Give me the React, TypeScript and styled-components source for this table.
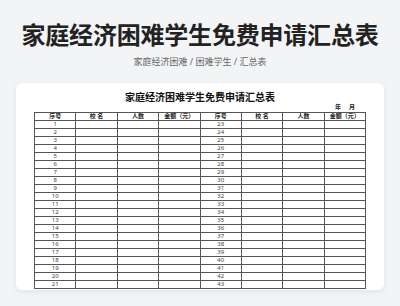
import React from "react";
import styled, { createGlobalStyle } from "styled-components";

const GlobalStyle = createGlobalStyle`
    html, body {
        margin: 0;
        padding: 0;
        background: #f3f4f6;
        font-family: "Noto Sans", "Noto Sans CJK SC", sans-serif;
    }
`;

const Page = styled.div`
    width: 400px;
    height: 306px;
    display: flex;
    flex-direction: column;
    align-items: center;
    overflow: hidden;
`;

const Title = styled.h1`
    margin: 20px 0 0;
    font-size: 24px;
    line-height: 30px;
    font-weight: 700;
    color: #222;
    letter-spacing: -0.2px;
`;

const Crumbs = styled.div`
    margin-top: 6px;
    font-size: 9px;
    line-height: 12px;
    color: #666;
`;

const Card = styled.div`
    margin-top: 15px;
    width: 368px;
    height: 207px;
    box-sizing: border-box;
    padding: 8px 18px 0;
    background: #fff;
    border-radius: 6px;
    box-shadow: 0 2px 6px rgba(0, 0, 0, 0.08);
    overflow: hidden;
`;

const SheetTitle = styled.div`
    text-align: center;
    font-size: 10px;
    line-height: 12px;
    font-weight: 700;
    color: #111;
`;

const DateLine = styled.div`
    display: flex;
    justify-content: flex-end;
    gap: 8px;
    padding-right: 11px;
    font-size: 6px;
    line-height: 9px;
    font-weight: 700;
    color: #222;
`;

const Sheet = styled.table`
    width: 332px;
    border-collapse: collapse;
    table-layout: fixed;
`;

const Cell = styled.td<{ $head?: boolean }>`
    height: 7px;
    padding: 0;
    border: 1px solid #555;
    text-align: center;
    font-size: 6px;
    line-height: 7px;
    font-weight: ${(p) => (p.$head ? 700 : 400)};
    color: ${(p) => (p.$head ? "#222" : "#444")};
    white-space: nowrap;
    overflow: hidden;
`;

const heads = ["序号", "校 名", "人数", "金额（元）"];

const App: React.FC = () => {
    const rows = Array.from({ length: 21 }, (_, i) => i + 1);
    return (
        <Page>
            <GlobalStyle />
            <Title>家庭经济困难学生免费申请汇总表</Title>
            <Crumbs>家庭经济困难 / 困难学生 / 汇总表</Crumbs>
            <Card>
                <SheetTitle>家庭经济困难学生免费申请汇总表</SheetTitle>
                <DateLine>
                    <span>年</span>
                    <span>月</span>
                </DateLine>
                <Sheet>
                    <thead>
                        <tr>
                            {[...heads, ...heads].map((h, i) => (
                                <Cell as="th" $head key={i}>
                                    {h}
                                </Cell>
                            ))}
                        </tr>
                    </thead>
                    <tbody>
                        {rows.map((n) => (
                            <tr key={n}>
                                <Cell>{n}</Cell>
                                <Cell />
                                <Cell />
                                <Cell />
                                <Cell>{n + 22}</Cell>
                                <Cell />
                                <Cell />
                                <Cell />
                            </tr>
                        ))}
                    </tbody>
                </Sheet>
            </Card>
        </Page>
    );
};

export default App;
